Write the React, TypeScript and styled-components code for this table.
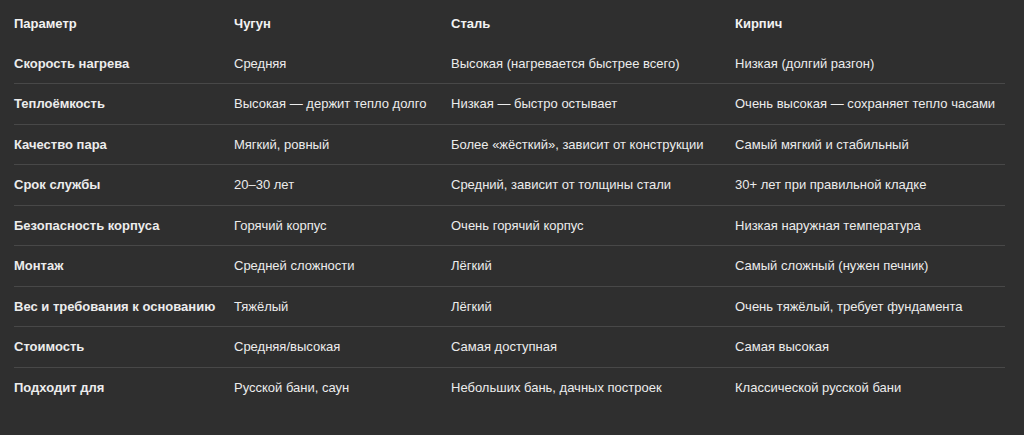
import styled, { createGlobalStyle } from 'styled-components';

const GlobalStyle = createGlobalStyle`
  html, body {
    margin: 0;
    padding: 0;
    background: #2f2f2f;
  }
  body {
    font-family: 'Liberation Sans', Arial, sans-serif;
    color: #ececec;
  }
`;

const headers = ['Параметр', 'Чугун', 'Сталь', 'Кирпич'];

const rows: string[][] = [
  ['Скорость нагрева', 'Средняя', 'Высокая (нагревается быстрее всего)', 'Низкая (долгий разгон)'],
  ['Теплоёмкость', 'Высокая — держит тепло долго', 'Низкая — быстро остывает', 'Очень высокая — сохраняет тепло часами'],
  ['Качество пара', 'Мягкий, ровный', 'Более «жёсткий», зависит от конструкции', 'Самый мягкий и стабильный'],
  ['Срок службы', '20–30 лет', 'Средний, зависит от толщины стали', '30+ лет при правильной кладке'],
  ['Безопасность корпуса', 'Горячий корпус', 'Очень горячий корпус', 'Низкая наружная температура'],
  ['Монтаж', 'Средней сложности', 'Лёгкий', 'Самый сложный (нужен печник)'],
  ['Вес и требования к основанию', 'Тяжёлый', 'Лёгкий', 'Очень тяжёлый, требует фундамента'],
  ['Стоимость', 'Средняя/высокая', 'Самая доступная', 'Самая высокая'],
  ['Подходит для', 'Русской бани, саун', 'Небольших бань, дачных построек', 'Классической русской бани'],
];

const Page = styled.div`
  width: 1024px;
  height: 435px;
  padding: 4px 19px 0 14px;
  box-sizing: border-box;
  overflow: hidden;
`;

const Table = styled.table`
  width: 100%;
  border-collapse: collapse;
  table-layout: fixed;
  font-size: 13px;
`;

const Row = styled.tr`
  border-bottom: 1px solid #484848;

  &:last-child {
    border-bottom: none;
  }
`;

const Cell = styled.td<{ $bold?: boolean }>`
  height: 39.5px;
  padding: 0;
  text-align: left;
  vertical-align: middle;
  white-space: nowrap;
  font-weight: ${({ $bold }) => ($bold ? 700 : 400)};
  color: #ececec;
`;

const HeadCell = styled.th`
  height: 39.5px;
  padding: 0;
  text-align: left;
  vertical-align: middle;
  white-space: nowrap;
  font-weight: 700;
  color: #f2f2f2;
`;

const colWidths = [220, 217, 284, 270];

export default function App() {
  return (
    <>
      <GlobalStyle />
      <Page>
        <Table>
          <colgroup>
            {colWidths.map((w, i) => (
              <col key={i} style={{ width: w }} />
            ))}
          </colgroup>
          <thead>
            <Row>
              {headers.map((h) => (
                <HeadCell key={h}>{h}</HeadCell>
              ))}
            </Row>
          </thead>
          <tbody>
            {rows.map((row, index) => (
              <Row key={index}>
                {row.map((cell, i) => (
                  <Cell key={i} $bold={i === 0}>
                    {cell}
                  </Cell>
                ))}
              </Row>
            ))}
          </tbody>
        </Table>
      </Page>
    </>
  );
}
